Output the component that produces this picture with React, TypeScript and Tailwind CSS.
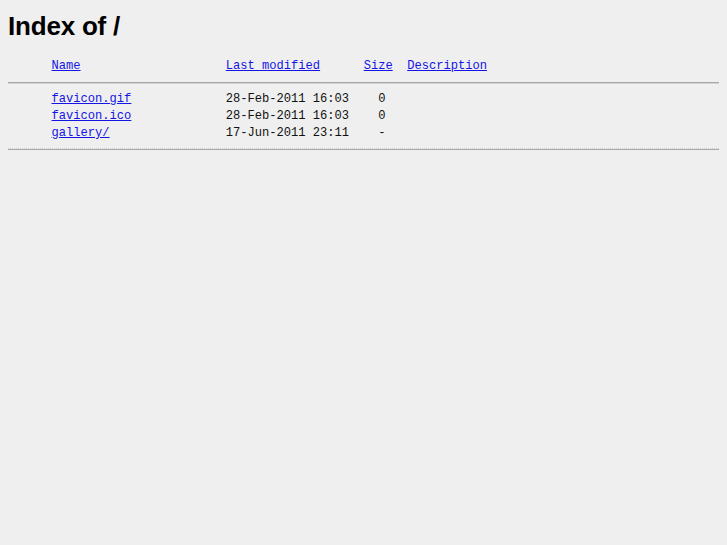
const mono = "font-['Liberation_Mono','Courier_New',monospace] text-[12.1px] leading-[17px] whitespace-pre text-[#111]"
const link = 'text-[#1414e6] underline'

const rows = [
  { name: 'favicon.gif', pad: 13, date: '28-Feb-2011 16:03', size: '0' },
  { name: 'favicon.ico', pad: 13, date: '28-Feb-2011 16:03', size: '0' },
  { name: 'gallery/', pad: 16, date: '17-Jun-2011 23:11', size: '-' },
]

export default function App() {
  return (
    <div className="min-h-screen w-full bg-[#efefef] px-2 pt-[11px]">
      <h1 className="font-['Liberation_Sans',Arial,sans-serif] text-[26px] leading-[30px] font-bold tracking-[-0.2px] text-black">
        Index of /
      </h1>
      <div className="mt-[17px]">
        <div className={mono}>
          {'      '}
          <a className={link}>Name</a>
          {' '.repeat(20)}
          <a className={link}>Last modified</a>
          {'      '}
          <a className={link}>Size</a>
          {'  '}
          <a className={link}>Description</a>
        </div>
        <div className="my-[7px] h-[2px] w-full border-t border-[#a6a6a6] bg-[#d4d4d4]" />
        {rows.map((r) => (
          <div key={r.name} className={mono}>
            {'      '}
            <a className={link}>{r.name}</a>
            {' '.repeat(r.pad)}
            {r.date}
            {'    '}
            {r.size}
          </div>
        ))}
        <div className="mt-[6px] w-full">
          <div className="h-px w-full border-t border-dotted border-[#cfcfcf]" />
          <div className="h-px w-full bg-[#a9a9a9]" />
        </div>
      </div>
    </div>
  )
}
